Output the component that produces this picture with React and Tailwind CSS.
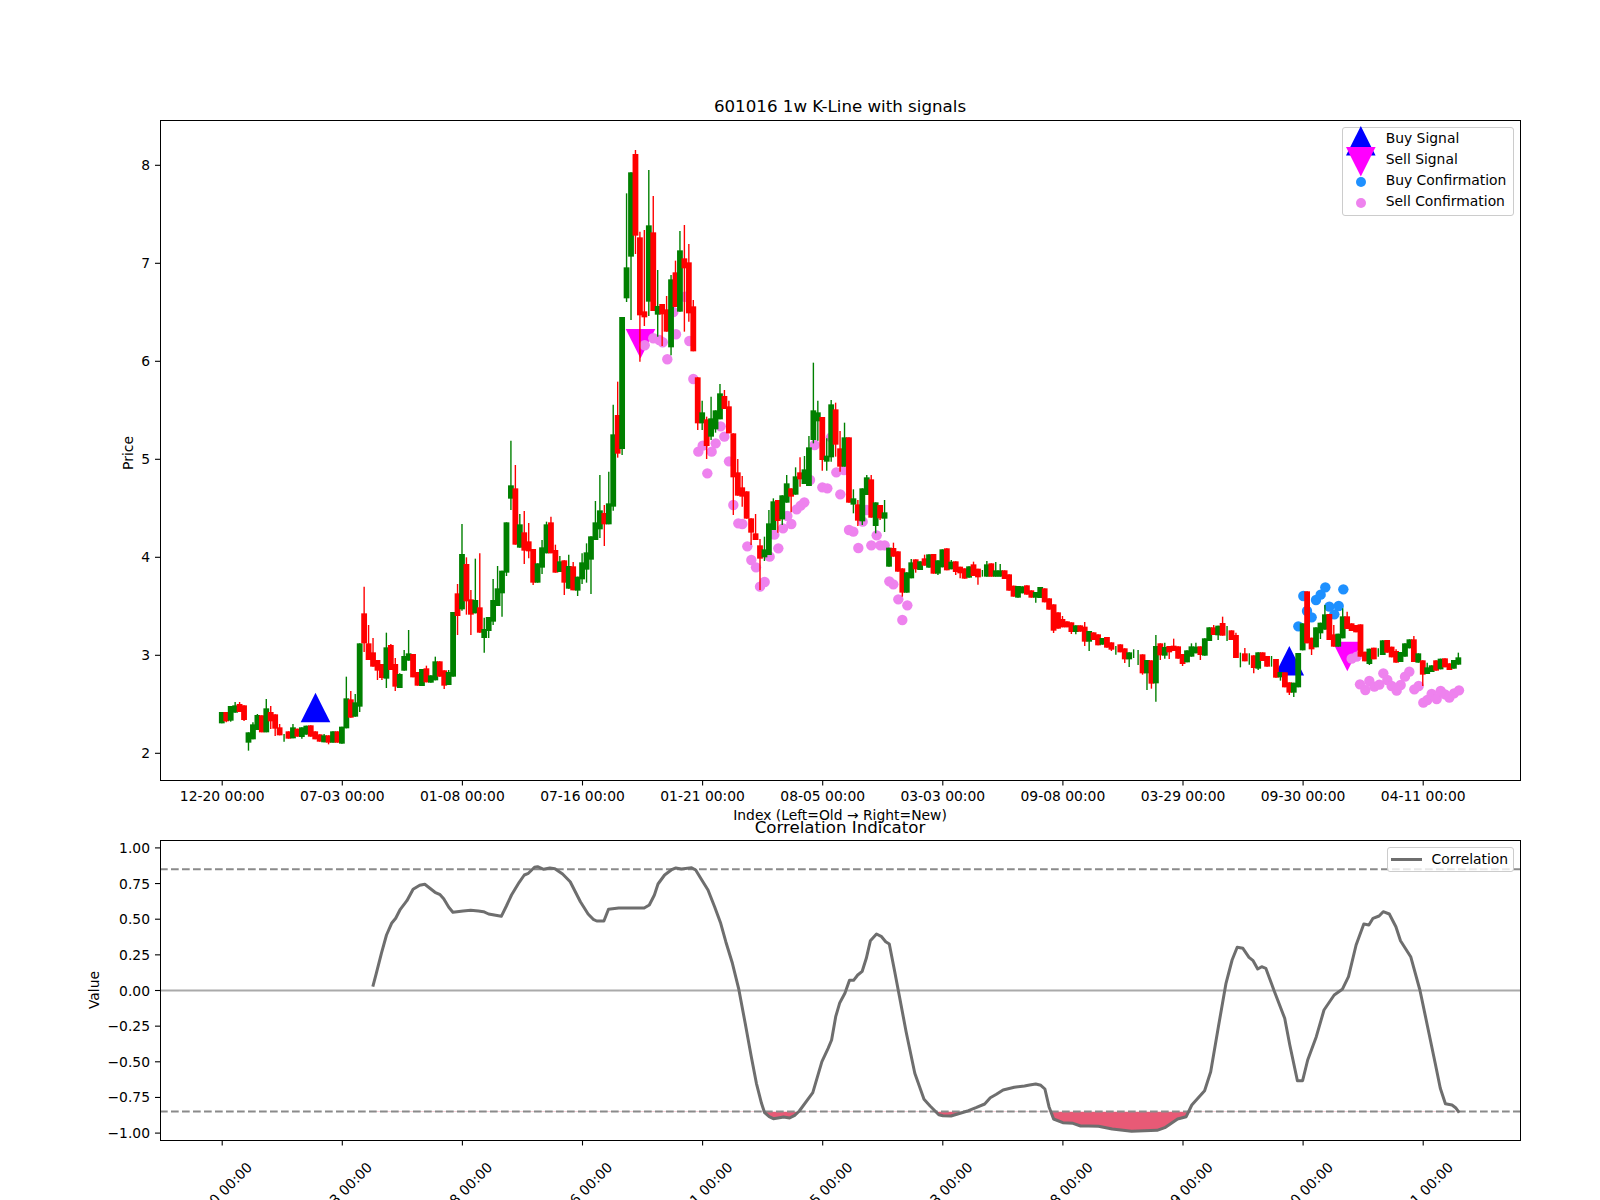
import React from "react";

const seg = (off, rows) =>
  rows.map(([c, t, b, h, l]) => ({
    c,
    t: off + t / 3,
    b: off + b / 3,
    h: off + (h ?? t) / 3,
    l: off + (l ?? b) / 3,
  }));

const n = null;
const candles = [
  ...seg(500, [
    ["g",636,670],["r",636,664,n,667],["g",618,662,n,665],["g",616,638,606],["r",612,636,606],["r",616,660,n,663],
    ["g",697,728,n,752],["g",673,718,667],["g",645,690,642],["r",646,697],["g",625,697,597],["r",636,664,618,687],
    ["r",643,686,n,708],["r",682,706,672],["g",702,703,702,725],["r",694,716],["g",682,715,672],["r",686,710],
    ["g",682,711,n,716],["g",677,704],["r",676,710],["r",694,718],["r",703,725],["g",706,727,702],["r",706,728,n,733],
    ["g",694,728],["r",694,728],["g",680,731],["g",595,685,530],["r",598,653,573],["g",607,650,582],["g",430,620,n,636],
    ["r",340,430,260,456],["r",430,480,375],["r",457,500,414],["r",480,512,n,540],["r",492,534,n,540],["g",442,536,398,564],
    ["r",435,510,432],["r",492,560,474,573],["g",522,564,520],["g",468,512,450],["g",460,482,390],["r",462,532],
    ["r",516,557],["g",507,558],["r",505,547,497],["g",526,548],["g",484,541,470],["r",484,530],["r",511,557,n,567],["g",516,555,510],
  ]),
  ...seg(400, [
    ["g",636,830],["r",580,648,552,705],["g",462,628,372,632],["r",492,604,472,644],["r",598,644,570,705],["g",600,640,476],
    ["r",622,698,460],["g",687,714,653,758],["g",651,693,n,714],["g",600,665,537,675],["g",565,618,498],["g",512,580,n,650],
    ["g",367,518,n,528],["g",256,296,122,330],["r",265,434,195],["g",373,443,342],["r",397,452,333,492],["r",424,454,369,475],
    ["r",447,548,n,555],["g",490,548],["g",442,503,420,522],["g",373,460,365],["r",367,460,350],["r",450,518,434],
    ["g",484,516,468],["r",481,548,n,585],["g",498,566,464],["r",499,571,486],["g",530,572,n,588],["g",487,538,460,552],
    ["g",457,509,430,548],["g",409,479,n,582],["g",367,420,303],["g",331,388,225,414],["r",339,373,315,438],["g",310,373,215],
    ["g",103,320,14,332],["r",45,161,-55,173],
  ]),
  ...seg(130, [
    ["g",561,957,n,975],["g",412,505,190,516],["g",127,380,n,570],["r",72,317,60,372],["r",322,556,305,695],["r",544,562,300,588],
    ["g",286,515,120,558],["r",307,543,198],["g",528,554,420,620],["r",522,553,n,648],["r",538,605,498],["g",448,652,435,676],
    ["r",427,531,392],["g",361,545,303],["r",385,415,285,605],["r",397,550,342,575],["r",529,664,510],
  ]),
  ...seg(360, [
    ["r",52,190,n,210],["g",157,190,122,210],["r",178,258,170,297],["g",175,230,110,240],["g",151,208,n,218],["g",100,178,72],
    ["r",108,147,90],["r",139,220,122],["r",220,352,n,465],["r",337,407,297],["r",382,410,348,440],["r",394,476],
    ["r",475,518,n,555],["r",520,540,462],["r",556,596,537,690],["g",568,592,530,603],["g",490,585,450],["g",424,510,415],
    ["r",420,483,n,518],["g",406,478,n,495],["g",370,428,345],["r",385,410,n,457],["g",349,404,322],["r",337,358,292,380],
    ["g",328,372,288],["g",262,378,228],["g",151,240,8,250],["g",157,184,122,242],["r",171,300,n,332],["g",287,305,235,332],
    ["g",133,292,120,305],["r",148,254,128,290],["r",265,320,213,335],["g",232,320,188],["r",232,428],["g",415,434,388,460],
    ["r",433,482,420,498],["g",385,484,n,495],["g",352,405,345],["r",358,473,345],["g",427,498,n,520],["r",435,475,n,480],
    ["g",457,476,420,516],
  ]),
  ...seg(520, [
    ["g",83,140],["r",84,110,68],["r",94,155],["r",145,218,n,230],["g",157,218],["g",127,175,117],["r",118,148,n,158],
    ["g",124,150],["r",115,137,104],["g",103,143],["r",102,161],["g",121,161,n,165],["g",88,142],["r",85,151],["g",125,148,120],
    ["r",124,156,n,165],["r",140,160,n,175],["r",145,176],["g",139,173],["r",133,168,125],["r",146,172,n,194],["g",150,151,150,170],
    ["g",133,170,123],["r",130,170],["g",151,170,126],["g",151,170,132],["r",151,177],["r",163,212],["r",197,230],["g",198,233],
    ["g",199,220],["r",196,224],["r",211,233],["g",216,233,n,248],["g",201,234],["r",205,247],["r",235,269],["r",253,332,n,339],
    ["r",277,326],["r",297,322,288],["r",304,322],["r",307,336,n,342],["g",316,336,n,343],["r",316,335],["r",320,365,306,378],
    ["g",333,365,n,393],["r",337,360],["r",343,376],["g",354,374],["r",351,383],["r",367,389,n,393],["g",378,379,378,404],
    ["r",373,397],["r",385,418,n,429],["g",397,418,n,441],["g",388,389,388,414],["g",390,391,390,435],["r",403,460,n,464],
    ["g",420,460,n,510],["r",421,491,n,506],["g",378,490,345,545],["r",370,406,n,420],["g",381,407,368,416],["r",378,397,n,417],
    ["r",377,393,356],
  ]),
  ...seg(560, [
    ["r",259,296],["r",282,312,n,318],["g",271,307],["g",259,290,250],["g",260,280,248],["r",259,285,n,300],["g",235,287],
    ["g",202,243],["r",202,225,195],["g",197,226,n,240],["r",189,227,170],["g",198,199,198,243],["r",211,240],["r",225,294,218],
    ["g",278,279,278,322],["r",280,304,264],["g",280,281,280,314],["r",286,324,n,340],["g",277,326,n,330],["r",277,303],["r",288,320],
    ["g",288,289,288,320],["r",297,353],["g",336,352,n,362],["r",337,382],["r",367,398,n,405],["g",368,398,n,411],["g",279,382],
    ["g",190,271],["r",94,250],["r",233,268,n,285],["g",202,262],["g",188,220,n,237],["g",163,209,135],["r",162,240],
    ["r",223,260,195],["g",221,260],["g",169,235,145],["r",169,207,155],["r",190,213],["r",195,217],["r",193,290],["r",275,304],
    ["g",266,312,n,315],["r",263,298],["g",265,266,265,290],["g",241,285],["r",240,278],["r",260,292],["r",273,308,268],
    ["g",276,306],["g",250,290],["g",238,265],["r",238,306,228],["g",280,308],["r",301,344,n,378],["g",322,342,308],["g",316,336],
    ["r",301,332],["g",296,328],["r",295,322],["r",310,330],["g",300,326],["g",292,314,278],
  ]),
];

const cx = (i) => 221.8 + 4.448 * i;

const pts = (ox, oy, rows) => rows.map(([x, y]) => [ox + x / 3, oy + y / 3]);

const violet = [
  [644.7,345.3],[653.3,338.3],[659.3,340],[662.7,342.3],[676,334.3],[689.3,341],[667.3,359.3],[673.3,312],[685,296.7],
  ...pts(680, 360, [
    [40,57],[55,275],[68,257],[82,340],[95,275],[107,250],[122,199],[133,230],[147,304],[160,435],[175,490],[187,492],[202,559],
    [214,600],[228,622],[240,680],[254,666],[269,590],[295,565],[283,524],[309,505],[322,468],[334,492],[350,448],[362,437],
    [373,427],[390,360],[404,255],[427,382],[442,385],[453,232],[469,337],[481,403],[492,330],[507,510],[520,515],[535,564],
    [548,485],[560,450],[574,556],[590,526],[601,556],[614,556],[628,664],[640,673],[655,718],[682,736],[667,780],
  ]),
  ...pts(1170, 560, [
    [545,296],[560,290],[570,373],[586,390],[598,363],[613,380],[628,374],[640,340],[652,360],[665,378],[680,392],[692,375],
    [705,350],[718,335],[733,388],[746,378],[760,428],[772,420],[785,402],[800,417],[812,393],[825,403],[838,413],[852,400],[867,391],
  ]),
];

const blue = pts(1170, 560, [
  [385,199],[400,108],[411,153],[425,172],[438,120],[452,104],[466,82],[478,140],[493,163],[506,138],[520,88],
]);

const z = (ox, rows) => rows.map(([x, y]) => [ox + x / 1.96, 770 + y / 3]);
const corr = [
  ...z(60, [
    [613,650],[620,610],[630,550],[640,495],[650,460],[658,445],[667,418],[680,392],[692,358],[705,346],[715,343],[725,355],[735,367],
    [745,374],[752,386],[762,412],[770,427],[790,423],[805,421],[820,423],[830,425],[840,432],[865,439],[875,408],[885,375],[900,337],
    [910,315],[918,310],[930,292],[936,290],[948,298],[960,294],[970,296],[985,312],[1000,335],[1010,365],[1020,395],[1035,432],
    [1045,448],[1052,453],[1066,453],[1075,418],[1095,414],[1145,414],[1155,405],[1165,375],[1172,342],[1185,315],[1200,298],[1207,294],
    [1218,297],[1238,293],[1246,300],[1258,330],[1270,360],[1283,410],[1295,460],[1305,515],[1318,580],[1330,655],[1343,760],[1355,860],
    [1365,940],[1375,1000],[1381,1028],[1390,1040],[1398,1046],[1410,1043],[1418,1041],[1430,1044],[1440,1036],[1449,1023],
  ]),
  ...z(800, [
    [25,968],[43,875],[55,835],[62,810],[70,740],[78,698],[88,670],[97,631],[105,631],[113,615],[122,604],[130,565],[138,512],[150,492],
    [160,500],[168,515],[175,522],[185,600],[195,680],[208,785],[225,910],[243,988],[255,1008],[272,1034],[280,1037],[296,1038],[330,1022],
    [345,1013],[362,1002],[373,983],[385,973],[398,960],[420,952],[440,948],[450,945],[462,942],[472,946],[480,957],[488,1010],[497,1047],
    [515,1058],[535,1060],[550,1068],[565,1068],[585,1069],[612,1077],[650,1084],[700,1081],[715,1073],[740,1047],[757,1040],[768,1005],
    [793,962],[805,905],[820,770],[835,640],[847,570],[857,532],[868,535],[880,562],[888,572],[897,597],[905,590],[913,595],[930,665],
    [950,745],[960,825],[975,932],[985,932],[995,870],[1012,800],[1027,720],[1047,675],[1063,658],[1075,620],[1090,525],[1105,462],
    [1115,465],[1123,445],[1135,438],[1143,425],[1155,432],[1168,470],[1177,512],[1197,560],[1215,660],[1230,770],[1245,880],[1255,955],
    [1265,1001],[1278,1005],[1285,1013],[1292,1028],
  ]),
];
const line = corr.map(([x, y]) => `${x.toFixed(1)},${y.toFixed(1)}`).join(" ");

const tickLabels = [
  "12-20 00:00","07-03 00:00","01-08 00:00","07-16 00:00","01-21 00:00","08-05 00:00",
  "03-03 00:00","09-08 00:00","03-29 00:00","09-30 00:00","04-11 00:00",
];
const tx = (k) => 222.2 + 120.1 * k;
const priceTicks = [2, 3, 4, 5, 6, 7, 8];
const corrTicks = ["1.00", "0.75", "0.50", "0.25", "0.00", "−0.25", "−0.50", "−0.75", "−1.00"];

const labelCls = "fill-black text-[13.89px]";

function TriUp({ x, y }) {
  return <polygon points={`${x},${y} ${x + 14.8},${y + 29.5} ${x - 14.8},${y + 29.5}`} fill="#0000ff" />;
}
function TriDown({ x, y }) {
  return <polygon points={`${x - 14.8},${y} ${x + 14.8},${y} ${x},${y + 29.5}`} fill="#ff00ff" />;
}

function PricePlot() {
  return (
    <svg width="1360" height="660" className="block overflow-visible">
      <g transform="translate(-160,-120)">
        {tickLabels.map((t, k) => (
          <g key={t}>
            <line x1={tx(k)} x2={tx(k)} y1="780" y2="785.5" stroke="#000" strokeWidth="1.1" />
            <text x={tx(k)} y="801" textAnchor="middle" className={labelCls}>{t}</text>
          </g>
        ))}
        {priceTicks.map((p) => {
          const y = 753.3 - 98 * (p - 2);
          return (
            <g key={p}>
              <line x1="155" x2="160" y1={y} y2={y} stroke="#000" strokeWidth="1.1" />
              <text x="150" y={y + 5} textAnchor="end" className={labelCls}>{p}</text>
            </g>
          );
        })}
        <text x="840" y="820" textAnchor="middle" className={labelCls}>Index (Left=Old → Right=New)</text>
        <text transform="translate(133,453) rotate(-90)" textAnchor="middle" className={labelCls}>Price</text>

        <TriUp x={315.5} y={692.7} />
        <TriUp x={1289.3} y={646} />
        <TriDown x={640.5} y={329} />
        <TriDown x={1347.3} y={641.7} />
        {violet.map(([x, y], i) => <circle key={i} cx={x} cy={y} r="5.2" fill="#ee82ee" />)}
        {blue.map(([x, y], i) => <circle key={i} cx={x} cy={y} r="5.2" fill="#1e90ff" />)}

        {candles.map((d, i) => {
          const col = d.c === "r" ? "#ff0000" : "#008000";
          const x = cx(i);
          const doji = d.b - d.t < 1;
          return (
            <g key={i}>
              <line x1={x} x2={x} y1={d.h} y2={d.l} stroke={col} strokeWidth="1.4" />
              {!doji && <rect x={x - 2.9} y={d.t} width="5.8" height={d.b - d.t} fill={col} />}
            </g>
          );
        })}
      </g>
    </svg>
  );
}

function CorrPlot() {
  return (
    <svg width="1360" height="300" className="block overflow-visible">
      <defs>
        <clipPath id="below">
          <rect x="160" y="1111.5" width="1360" height="28" />
        </clipPath>
      </defs>
      <g transform="translate(-160,-840)">
        {tickLabels.map((t, k) => (
          <g key={t}>
            <line x1={tx(k)} x2={tx(k)} y1="1140" y2="1145.5" stroke="#000" strokeWidth="1.1" />
            <text
              transform={`translate(${tx(k) - 2.7},1194.7) rotate(-45)`}
              textAnchor="middle"
              dominantBaseline="central"
              className={labelCls}
            >
              {t}
            </text>
          </g>
        ))}
        {corrTicks.map((t, k) => {
          const y = 847.9 + k * 35.65;
          return (
            <g key={t}>
              <line x1="155" x2="160" y1={y} y2={y} stroke="#000" strokeWidth="1.1" />
              <text x="150" y={y + 5} textAnchor="end" className={labelCls}>{t}</text>
            </g>
          );
        })}
        <text transform="translate(98.5,990) rotate(-90)" textAnchor="middle" className={labelCls}>Value</text>

        <polygon
          points={`${corr[0][0]},1111.5 ${line} ${corr[corr.length - 1][0]},1111.5`}
          fill="#e85a76"
          clipPath="url(#below)"
        />
        <line x1="160" x2="1520" y1="990.5" y2="990.5" stroke="#aaaaaa" strokeWidth="1.9" />
        <line x1="160" x2="1520" y1="869.3" y2="869.3" stroke="#8a8a8a" strokeWidth="2" strokeDasharray="7.7 3.3" />
        <line x1="160" x2="1520" y1="1111.5" y2="1111.5" stroke="#8a8a8a" strokeWidth="2" strokeDasharray="7.7 3.3" />
        <polyline points={line} fill="none" stroke="#6e6e6e" strokeWidth="3" strokeLinejoin="round" />
      </g>
    </svg>
  );
}

function Tri({ up }) {
  return (
    <svg width="29.6" height="29.5" className="mt-[3.6px] shrink-0 overflow-visible">
      <polygon points={up ? "14.8,0 29.6,29.5 0,29.5" : "0,0 29.6,0 14.8,29.5"} fill={up ? "#0000ff" : "#ff00ff"} />
    </svg>
  );
}

function Dot({ color }) {
  return <span className={`mt-[4px] h-[10.4px] w-[10.4px] shrink-0 rounded-full ${color}`} />;
}

function LegendRow({ children, label }) {
  return (
    <div className="flex h-[20.8px] items-center gap-[6.7px] whitespace-nowrap">
      <span className="flex h-full w-[36px] shrink-0 items-center justify-center">{children}</span>
      <span className="relative">{label}</span>
    </div>
  );
}

export default function App() {
  return (
    <div className="w-[1600px] h-[1200px] overflow-hidden bg-white text-black text-[13.89px] font-['DejaVu_Sans',sans-serif]">
      <div className="ml-[160px] w-[1360px] pt-[97px]">
        <h2 className="h-[23px] text-center text-[16.67px] leading-[20px] font-normal">601016 1w K-Line with signals</h2>
        <div className="relative h-[660px]">
          <PricePlot />
          <div className="absolute top-0 left-0 -right-[1px] -bottom-[1px] border border-black pointer-events-none" />
          <div className="absolute top-[7.3px] right-[6px] h-[88.4px] w-[172px] rounded-[3px] border border-[#cccccc] bg-white/80">
            <LegendRow label="Buy Signal"><Tri up /></LegendRow>
            <LegendRow label="Sell Signal"><Tri /></LegendRow>
            <LegendRow label="Buy Confirmation"><Dot color="bg-[#1e90ff]" /></LegendRow>
            <LegendRow label="Sell Confirmation"><Dot color="bg-[#ee82ee]" /></LegendRow>
          </div>
        </div>
        <h2 className="mt-[38px] h-[22px] text-center text-[16.67px] leading-[20px] font-normal">Correlation Indicator</h2>
        <div className="relative h-[300px]">
          <CorrPlot />
          <div className="absolute top-0 left-0 -right-[1px] -bottom-[1px] border border-black pointer-events-none" />
          <div className="absolute top-[7.3px] right-[6.2px] flex h-[25px] w-[127px] items-center gap-[9.6px] rounded-[3px] border border-[#cccccc] bg-white/80 pl-[3.6px]">
            <span className="h-[2.8px] w-[30.6px] bg-[#6e6e6e]" />
            <span>Correlation</span>
          </div>
        </div>
      </div>
    </div>
  );
}
